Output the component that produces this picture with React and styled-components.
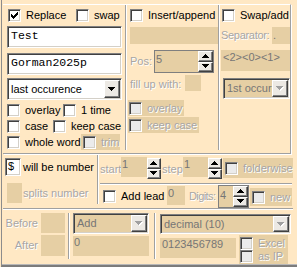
import React from "react";
import styled, { createGlobalStyle, css } from "styled-components";

const BG = "#FFE8C4";
const TAN = "#E6CFA4";
const DIS = "#a6a6a6";
const VAL = "#767676";

const GlobalStyle = createGlobalStyle`
  *, *::before, *::after { box-sizing: border-box; }
  html, body { margin: 0; padding: 0; background: ${BG}; }
  body {
    font-family: "Liberation Sans", Arial, sans-serif;
    font-size: 11px;
    line-height: 13px;
    color: #000;
  }
`;

const place = css`
  margin-top: ${(p) => p.$mt || 0}px;
  margin-left: ${(p) => p.$ml || 0}px;
  flex: none;
`;

const sunken = css`
  border: 1px solid;
  border-color: #808080 #ffffff #ffffff #808080;
  box-shadow: inset 1px 1px 0 #404040, inset -1px -1px 0 #d4d0c8;
`;

const raised = css`
  border: 1px solid;
  border-color: #ffffff #404040 #404040 #ffffff;
  box-shadow: inset -1px -1px 0 #808080;
  background: #ece9e4;
`;

const disabledText = css`
  color: ${DIS};
  text-shadow: 1px 1px 0 #ffffff;
`;

const Frame = styled.div`
  width: 296px;
  height: 267px;
  margin-left: 1px;
  border-left: 1px solid #8c8c8c;
  border-bottom: 2px solid #7c7c7c;
  box-shadow: inset 0 -1px 0 #b8b8b8;
  display: flex;
  flex-direction: column;
  overflow: hidden;
`;

const TopGroup = styled.section`
  margin: 4px 0 0 1px;
  width: 288px;
  height: 150px;
  border-top: 1px solid #fff;
  border-right: 1px solid #a0a0a0;
  border-bottom: 1px solid #a0a0a0;
  box-shadow: 1px 1px 0 #fff;
  display: flex;
  flex: none;
`;

const Band = styled.section`
  margin-left: 1px;
  width: 290px;
  height: 54px;
  display: flex;
  flex: none;
`;

const Column = styled.div`
  width: ${(p) => p.$w}px;
  padding: ${(p) => p.$pt ?? 4}px 0 0 ${(p) => p.$pl || 0}px;
  display: flex;
  flex-direction: column;
  align-items: flex-start;
  flex: none;
`;

const Stack = styled.div`
  width: ${(p) => p.$w}px;
  display: flex;
  flex-direction: column;
  flex: none;
`;

const VDivider = styled.div`
  width: 2px;
  flex: none;
  margin: ${(p) => p.$mt || 0}px 0 ${(p) => p.$mb || 0}px;
  border-left: 1px solid #a0a0a0;
  border-right: 1px solid #fff;
`;

const HDivider = styled.div`
  ${place};
  width: ${(p) => p.$w}px;
  height: 2px;
  border-top: 1px solid #a0a0a0;
  border-bottom: 1px solid #fff;
`;

const Row = styled.div`
  ${place};
  display: flex;
  align-items: ${(p) => p.$align || "center"};
  height: ${(p) => (p.$h ? `${p.$h}px` : "auto")};
`;

const Check = styled.label`
  ${place};
  display: flex;
  align-items: center;
  gap: 5px;
  width: ${(p) => (p.$w ? `${p.$w}px` : "auto")};
  height: ${(p) => p.$h || 13}px;
  padding-left: ${(p) => p.$pl || 0}px;
  background: ${(p) => (p.$band ? TAN : "transparent")};
  white-space: nowrap;
  ${(p) => p.$disabled && disabledText};
`;

const Box = styled.span`
  ${sunken};
  width: 13px;
  height: 13px;
  flex: none;
  display: flex;
  align-items: center;
  justify-content: center;
  background: ${(p) => (p.$disabled ? "#ebebeb" : "#fff")};
`;

const TextBox = styled.div`
  ${place};
  ${sunken};
  width: ${(p) => p.$w}px;
  height: ${(p) => p.$h}px;
  background: #fff;
  padding: ${(p) => p.$pt ?? 2}px 0 0 ${(p) => p.$pl ?? 3}px;
  white-space: nowrap;
  overflow: hidden;
  ${(p) =>
    p.$mono &&
    css`
      font-family: "Liberation Mono", "Courier New", monospace;
      font-size: 11.5px;
    `}
`;

const TanField = styled.div`
  ${place};
  width: ${(p) => p.$w}px;
  height: ${(p) => p.$h}px;
  background: ${TAN};
  color: ${VAL};
  padding: ${(p) => p.$pt || 0}px 0 0 ${(p) => p.$pl || 0}px;
  white-space: nowrap;
  overflow: hidden;
`;

const Label = styled.span`
  ${place};
  width: ${(p) => (p.$w ? `${p.$w}px` : "auto")};
  text-align: ${(p) => (p.$right ? "right" : "left")};
  letter-spacing: ${(p) => p.$ls || 0}px;
  white-space: nowrap;
  ${(p) => p.$disabled && disabledText};
`;

const SelectBox = styled.div`
  ${place};
  ${sunken};
  width: ${(p) => p.$w}px;
  height: ${(p) => p.$h}px;
  padding: 1px;
  display: flex;
  background: ${(p) => (p.$disabled ? TAN : "#fff")};
`;

const SelectText = styled.span`
  flex: 1;
  min-width: 0;
  overflow: hidden;
  white-space: nowrap;
  padding-left: 2px;
  display: flex;
  align-items: center;
  color: ${(p) => (p.$disabled ? VAL : "#000")};
`;

const DropButton = styled.span`
  ${raised};
  width: 16px;
  flex: none;
  display: flex;
  align-items: center;
  justify-content: center;
`;

const SpinBox = styled.div`
  ${place};
  width: ${(p) => p.$w}px;
  height: ${(p) => p.$h}px;
  border: 1px solid #7f7f7f;
  background: ${TAN};
  display: flex;
`;

const SpinValue = styled.span`
  flex: 1;
  color: ${VAL};
  padding: ${(p) => p.$pt || 0}px 0 0 1px;
`;

const SpinColumn = styled.div`
  ${place};
  width: ${(p) => p.$w || 14}px;
  height: ${(p) => (p.$h ? `${p.$h}px` : "auto")};
  display: flex;
  flex-direction: column;
`;

const SpinButton = styled.span`
  ${raised};
  flex: 1;
  display: flex;
  align-items: center;
  justify-content: center;
`;

const LabelGrid = styled.div`
  width: 65px;
  flex: none;
  padding-top: 3px;
  display: grid;
  grid-template-columns: 35px 24px;
  grid-template-rows: 20px 21px;
  column-gap: 3px;
  row-gap: 2px;
  align-items: center;
`;

const CheckStack = styled.div`
  ${place};
  width: 49px;
  height: 29px;
  background: ${TAN};
  padding: 2px 0 0 1px;
  display: flex;
  flex-direction: column;
`;

const Glyph = styled.svg`
  display: block;
  flex: none;
  shape-rendering: crispEdges;
`;

const CheckMark = () => (
  <Glyph width="7" height="7" viewBox="0 0 7 7">
    {[2, 3, 4, 3, 2, 1, 0].map((y, x) => (
      <rect key={x} x={x} y={y} width="1" height="3" fill="#000" />
    ))}
  </Glyph>
);

const Arrow = ({ up, disabled }) => {
  const rows = [0, 1, 2, 3].map((i) => ({ x: i, y: up ? 3 - i : i, w: 7 - 2 * i }));
  return (
    <Glyph width="8" height="5" viewBox="0 0 8 5">
      {disabled &&
        rows.map((r, i) => (
          <rect key={`s${i}`} x={r.x + 1} y={r.y + 1} width={r.w} height="1" fill="#fff" />
        ))}
      {rows.map((r, i) => (
        <rect key={i} x={r.x} y={r.y} width={r.w} height="1" fill={disabled ? "#a0a0a0" : "#000"} />
      ))}
    </Glyph>
  );
};

const CheckBox = ({ checked, disabled, children, ...rest }) => (
  <Check $disabled={disabled} {...rest}>
    <Box $disabled={disabled}>{checked && <CheckMark />}</Box>
    <span>{children}</span>
  </Check>
);

const Select = ({ value, disabled, ...rest }) => (
  <SelectBox $disabled={disabled} {...rest}>
    <SelectText $disabled={disabled}>{value}</SelectText>
    <DropButton>
      <Arrow disabled={disabled} />
    </DropButton>
  </SelectBox>
);

const Spinner = (props) => (
  <SpinColumn {...props}>
    <SpinButton>
      <Arrow up />
    </SpinButton>
    <SpinButton>
      <Arrow />
    </SpinButton>
  </SpinColumn>
);

const SpinField = ({ value, $pt, ...rest }) => (
  <SpinBox {...rest}>
    <SpinValue $pt={$pt}>{value}</SpinValue>
    <Spinner $w={15} />
  </SpinBox>
);

export default function App() {
  return (
    <>
      <GlobalStyle />
      <Frame>
        <TopGroup>
          <Column $w={122} $pl={4}>
            <Row $ml={1}>
              <CheckBox checked $w={68}>Replace</CheckBox>
              <CheckBox>swap</CheckBox>
            </Row>
            <TextBox $mono $w={115} $h={22} $mt={4}>Test</TextBox>
            <TextBox $mono $w={115} $h={22} $mt={5}>Gorman2025p</TextBox>
            <Select value="last occurence" $w={115} $h={22} $mt={3} />
            <Row $h={16} $mt={2}>
              <CheckBox $w={56}>overlay</CheckBox>
              <CheckBox>1 time</CheckBox>
            </Row>
            <Row $h={16}>
              <CheckBox $w={46}>case</CheckBox>
              <CheckBox>keep case</CheckBox>
            </Row>
            <Row $h={16}>
              <CheckBox $w={74}>whole word</CheckBox>
              <CheckBox disabled $band $w={39} $h={16} $pl={2}>trim</CheckBox>
            </Row>
          </Column>
          <VDivider $mb={3} />
          <Column $w={91} $pl={3}>
            <CheckBox>Insert/append</CheckBox>
            <TanField $w={88} $h={17} $mt={5} />
            <Row $h={23} $mt={6}>
              <Label $disabled $w={24}>Pos:</Label>
              <SpinField value="5" $pt={2} $w={60} $h={23} />
            </Row>
            <Row $h={16} $mt={2} $align="flex-end">
              <Label $disabled $w={55}>fill up with:</Label>
              <TanField $w={16} $h={16} />
            </Row>
            <CheckBox disabled $band $w={56} $h={16} $pl={1} $mt={9} $ml={-2}>overlay</CheckBox>
            <CheckBox disabled $band $w={71} $h={16} $pl={1} $mt={1} $ml={-2}>keep case</CheckBox>
          </Column>
          <VDivider $mb={3} />
          <Column $w={70} $pl={1}>
            <CheckBox $ml={1}>Swap/add</CheckBox>
            <Row $h={17} $mt={5}>
              <Label $disabled $w={51} $ls={-0.3}>Separator:</Label>
              <TanField $w={18} $h={17} $pt={2} $pl={1}>.</TanField>
            </Row>
            <TanField $w={69} $h={21} $mt={6} $pt={1} $pl={2}>&lt;2&gt;&lt;0&gt;&lt;1&gt;</TanField>
            <Select disabled value="1st occur" $w={67} $h={21} $mt={7} $ml={2} />
          </Column>
        </TopGroup>

        <Band>
          <Column $w={94} $pl={2}>
            <Row $h={18}>
              <TextBox $w={16} $h={18} $pt={1} $pl={2}>$</TextBox>
              <Label $ml={2}>will be number</Label>
            </Row>
            <Row $h={20} $mt={7}>
              <TanField $w={15} $h={20} $ml={2} />
              <Label $disabled $ml={1}>splits number</Label>
            </Row>
          </Column>
          <VDivider $mt={1} $mb={4} />
          <Stack $w={194}>
            <Row $h={29} $align="flex-start">
              <Label $disabled $w={21} $ml={1} $mt={9}>start</Label>
              <TanField $w={26} $h={20} $mt={3} $pt={1} $pl={1}>1</TanField>
              <Spinner $h={21} $mt={4} />
              <Label $disabled $w={21} $ml={1} $mt={9}>step</Label>
              <TanField $w={25} $h={20} $mt={3} $pt={1} $pl={1}>1</TanField>
              <Spinner $h={21} $mt={4} />
              <CheckBox disabled $band $w={70} $h={20} $pl={2} $mt={4} $ml={1}>folderwise</CheckBox>
            </Row>
            <HDivider $w={192} $ml={1} />
            <Row $h={23} $align="flex-start">
              <CheckBox $w={64} $ml={4} $mt={5}>Add lead</CheckBox>
              <TanField $w={18} $h={19} $mt={1} $pt={1} $pl={1}>0</TanField>
              <Label $disabled $w={29} $ml={4} $mt={5} $ls={-0.6}>Digits:</Label>
              <SpinField value="4" $pt={3} $w={31} $h={23} />
              <CheckBox disabled $band $w={42} $h={18} $pl={2} $mt={3} $ml={1}>new</CheckBox>
            </Row>
          </Stack>
        </Band>

        <HDivider $w={290} $ml={1} />

        <Band>
          <LabelGrid>
            <Label $disabled $right>Before</Label>
            <TanField $w={24} $h={20} />
            <Label $disabled $right>After</Label>
            <TanField $w={24} $h={21} />
          </LabelGrid>
          <VDivider $mt={3} $mb={5} />
          <Column $w={84} $pl={3} $pt={3}>
            <Select disabled value="Add" $w={76} $h={21} />
            <TanField $w={76} $h={20} $mt={2} $pl={1}>0</TanField>
          </Column>
          <VDivider $mt={3} $mb={5} />
          <Column $w={137} $pl={4} $pt={4}>
            <Select disabled value="decimal (10)" $w={131} $h={20} />
            <Row $mt={1} $align="flex-start">
              <TanField $w={76} $h={20} $mt={3} $pl={2}>0123456789</TanField>
              <CheckStack $ml={3}>
                <CheckBox disabled>Excel</CheckBox>
                <CheckBox disabled>as IP</CheckBox>
              </CheckStack>
            </Row>
          </Column>
        </Band>
      </Frame>
    </>
  );
}
